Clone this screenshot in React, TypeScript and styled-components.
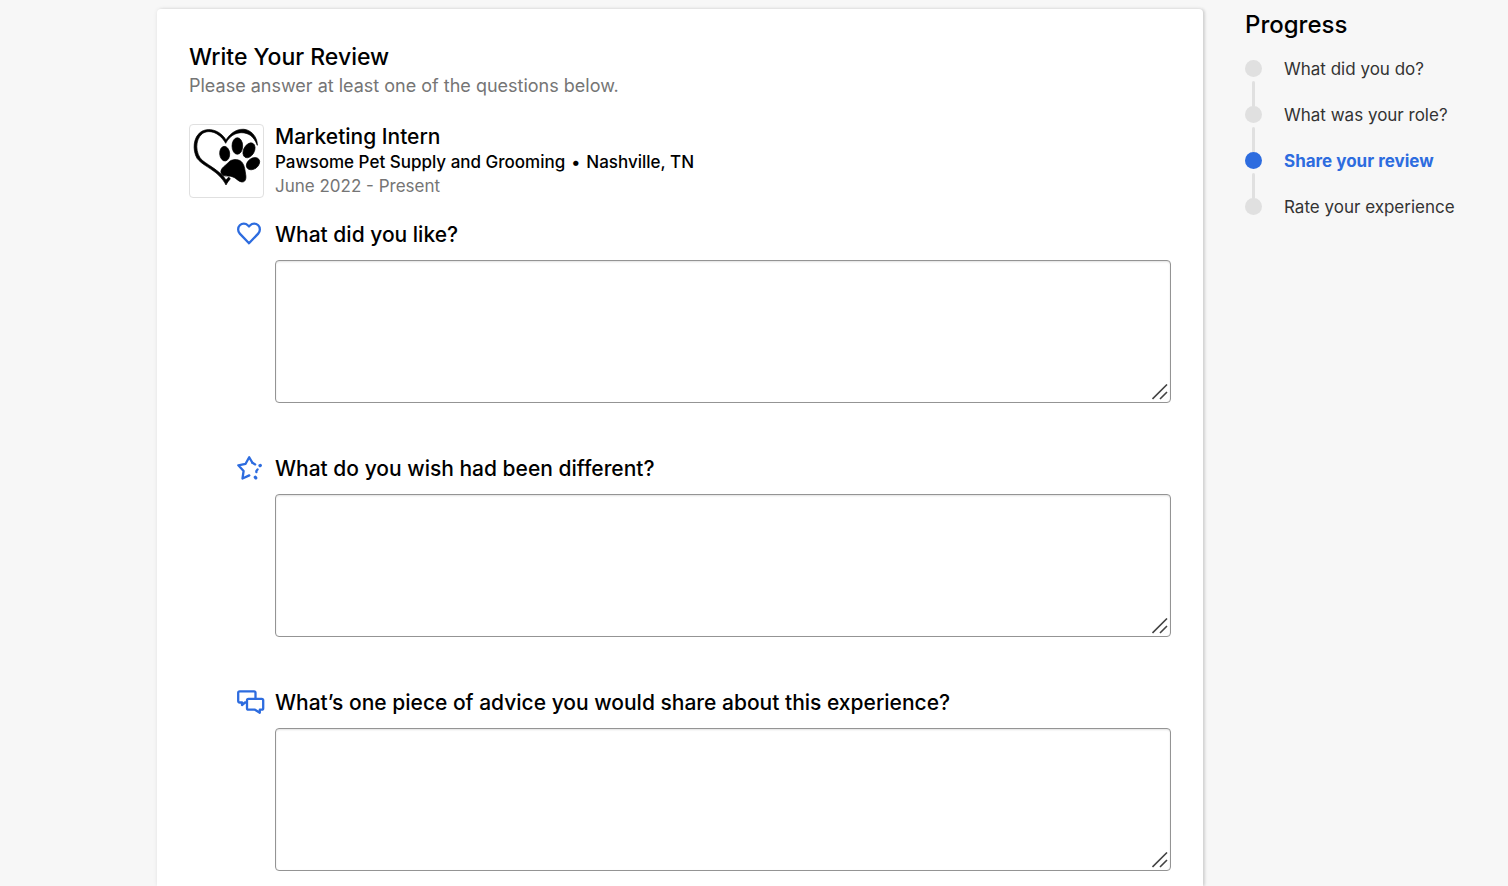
import React, { useId } from "react";
import styled, { createGlobalStyle } from "styled-components";

const GlobalStyle = createGlobalStyle`
  *, *::before, *::after { box-sizing: border-box; }
  body {
    margin: 0;
    background: #f7f7f7;
    color: #000;
    font-family: Inter, "Liberation Sans", sans-serif;
    -webkit-font-smoothing: antialiased;
  }
  h1, h2, h3, p, ol { margin: 0; padding: 0; }
`;

const Page = styled.div`
  display: flex;
  align-items: flex-start;
  min-height: 100vh;
  padding: 9px 0 0 157px;
`;

const Card = styled.main`
  flex: 1;
  min-width: 0;
  padding: 32px 32px 15px;
  background: #fff;
  border-radius: 4px 4px 0 0;
  box-shadow: 0 0 4px rgba(0, 0, 0, 0.08), 2px 0 3px rgba(0, 0, 0, 0.12);
`;

const Title = styled.h1`
  font-size: 23px;
  line-height: 32px;
  font-weight: 500;
`;

const Subtitle = styled.p`
  font-size: 18px;
  line-height: 26px;
  color: #757575;
`;

const Experience = styled.section`
  display: flex;
  gap: 11px;
  margin-top: 25px;
`;

const LogoFrame = styled.div`
  display: flex;
  width: 75px;
  height: 74px;
  border: 1px solid #e0e0e0;
  border-radius: 4px;
  overflow: hidden;
`;

const JobTitle = styled.h2`
  font-size: 21px;
  line-height: 26px;
  font-weight: 500;
`;

const Employer = styled.p`
  display: flex;
  gap: 6px;
  font-size: 17px;
  line-height: 24px;
  font-weight: 500;
`;

const Dates = styled.p`
  font-size: 17px;
  line-height: 24px;
  color: #757575;
`;

const Questions = styled.form`
  display: grid;
  gap: 45px;
  margin-top: 16px;
`;

const QuestionBlock = styled.div`
  display: grid;
  grid-template-columns: 38px 1fr;
  padding-left: 48px;
`;

const IconCell = styled.span`
  display: flex;
  align-items: center;
  height: 40px;
`;

const QuestionLabel = styled.label`
  height: 46px;
  font-size: 21px;
  line-height: 42px;
  font-weight: 500;
`;

const AnswerField = styled.div`
  position: relative;
  display: flex;
  grid-column: 2;
`;

const Answer = styled.textarea`
  width: 100%;
  height: 143px;
  padding: 12px;
  border: 1px solid #949494;
  border-radius: 4px;
  background: #fff;
  box-shadow: inset 0 1px 2px rgba(0, 0, 0, 0.12);
  font: inherit;
  font-size: 17px;
  resize: vertical;
  &::-webkit-resizer { display: none; }
`;

const Grip = styled.svg`
  position: absolute;
  right: 3px;
  bottom: 3px;
  pointer-events: none;
`;

const Aside = styled.aside`
  flex: none;
  width: 305px;
  padding-left: 42px;
`;

const AsideTitle = styled.h2`
  font-size: 24px;
  line-height: 32px;
  font-weight: 500;
`;

const Steps = styled.ol`
  margin-top: 5px;
  list-style: none;
`;

const Step = styled.li<{ $current?: boolean }>`
  display: grid;
  grid-template-columns: 17px 1fr;
  column-gap: 22px;
  color: ${(p) => (p.$current ? "#2d6cdf" : "#333")};
  font-size: 17px;
  line-height: 46px;
  font-weight: ${(p) => (p.$current ? 700 : 400)};
`;

const Marker = styled.span<{ $current?: boolean }>`
  display: flex;
  flex-direction: column;
  align-items: center;
  gap: 4px;
  padding-top: 14px;
  &::before {
    content: "";
    width: 17px;
    height: 17px;
    border-radius: 50%;
    background: ${(p) => (p.$current ? "#2d6cdf" : "#e0e0e0")};
  }
`;

const Connector = styled.span`
  width: 3px;
  height: 26px;
  margin-bottom: -15px;
  border-radius: 2px;
  background: #e0e0e0;
`;

const PawLogo = () => (
  <svg
    width="73"
    height="72"
    viewBox="31 31 219 216"
    stroke="#000"
    strokeWidth="2"
    role="img"
    aria-label="Pawsome Pet Supply and Grooming logo"
  >
    <path d="M139 76C122 46 84 36 62 53C42 68 37 104 52 131C66 150 97 162 117 182C127 192 134 201 139 211C142 204 147 199 152 192L147 187L139 196C123 170 91 155 68 137C47 118 45 75 68 57C90 42 122 56 138 86C151 60 178 48 202 57C217 62 226 75 233 92C233 69 219 51 200 45C176 39 152 54 139 76Z" />
    <ellipse cx="135" cy="117" rx="15" ry="22" transform="rotate(-5 135 117)" />
    <ellipse cx="173" cy="94" rx="16" ry="25" />
    <ellipse cx="208" cy="107" rx="16" ry="24" transform="rotate(29 208 107)" />
    <ellipse cx="220" cy="147" rx="16" ry="22" transform="rotate(53 220 147)" />
    <path d="M151 139C163 132 180 133 188 144C195 154 196 166 198 179C201 194 196 203 186 202C175 201 170 189 157 186C144 182 133 188 126 178C119 168 129 158 138 151Z" />
  </svg>
);

const iconProps = {
  fill: "none",
  stroke: "#2d6cdf",
  strokeWidth: 2.3,
  strokeLinecap: "round" as const,
  strokeLinejoin: "round" as const,
  "aria-hidden": true,
};

const HeartIcon = () => (
  <svg width="28" height="28" viewBox="0 0 28 28" {...iconProps}>
    <path d="M12 23.300L2.800 13.600C0.600 11.200 0.600 7.500 2.800 5.300C5.100 3 8.600 3 10.800 5.300L12 6.500L13.200 5.300C15.400 3 18.900 3 21.200 5.300C23.400 7.500 23.400 11.200 21.200 13.600Z" />
  </svg>
);

const StarIcon = () => (
  <svg width="28" height="28" viewBox="0 0 28 28" {...iconProps}>
    <path d="M15.400 8.800L12.200 3.200L8.600 9.800L1.300 11.300L6.600 17L5.500 24.500L12.300 21.400" />
    <path d="M15.400 8.800L18.200 10.400M20.600 15.400L19.300 17.200L19.400 18.200" />
    <path d="M23 11.700L23.300 11.500M18.300 23.300L18.800 23.900" strokeWidth="3.200" />
  </svg>
);

const ChatIcon = () => (
  <svg width="30" height="28" viewBox="0 0 30 28" {...iconProps}>
    <path d="M9.500 14.500H8L5 17V14.500H2.700Q1.200 14.500 1.200 13V4.800Q1.200 3.300 2.700 3.300H17Q18.500 3.300 18.500 4.800V10" />
    <path d="M11.500 10.800H24.700Q26.200 10.800 26.200 12.300V20.200Q26.200 21.700 24.700 21.700H22.800V24.800L18 21.700H11.500Q10 21.700 10 20.200V12.300Q10 10.800 11.500 10.800Z" />
  </svg>
);

const questions = [
  { text: "What did you like?", Icon: HeartIcon },
  { text: "What do you wish had been different?", Icon: StarIcon },
  { text: "What’s one piece of advice you would share about this experience?", Icon: ChatIcon },
];

const steps = ["What did you do?", "What was your role?", "Share your review", "Rate your experience"];
const currentStep = 2;

function Question({ text, Icon }: { text: string; Icon: React.ComponentType }) {
  const id = useId();
  return (
    <QuestionBlock>
      <IconCell>
        <Icon />
      </IconCell>
      <QuestionLabel htmlFor={id}>{text}</QuestionLabel>
      <AnswerField>
        <Answer id={id} />
        <Grip width="16" height="16" viewBox="0 0 16 16" stroke="#444" strokeWidth="1.6" aria-hidden>
          <path d="M0.500 15L15 0.500M8 15L15 8" />
        </Grip>
      </AnswerField>
    </QuestionBlock>
  );
}

export default function App() {
  return (
    <>
      <GlobalStyle />
      <Page>
        <Card>
          <Title>Write Your Review</Title>
          <Subtitle>Please answer at least one of the questions below.</Subtitle>
          <Experience>
            <LogoFrame>
              <PawLogo />
            </LogoFrame>
            <div>
              <JobTitle>Marketing Intern</JobTitle>
              <Employer>
                <span>Pawsome Pet Supply and Grooming</span>
                <span>•</span>
                <span>Nashville, TN</span>
              </Employer>
              <Dates>June 2022 - Present</Dates>
            </div>
          </Experience>
          <Questions>
            {questions.map((q) => (
              <Question key={q.text} {...q} />
            ))}
          </Questions>
        </Card>
        <Aside>
          <AsideTitle>Progress</AsideTitle>
          <Steps>
            {steps.map((label, i) => (
              <Step key={label} $current={i === currentStep} aria-current={i === currentStep ? "step" : undefined}>
                <Marker $current={i === currentStep}>{i < steps.length - 1 && <Connector />}</Marker>
                <span>{label}</span>
              </Step>
            ))}
          </Steps>
        </Aside>
      </Page>
    </>
  );
}
